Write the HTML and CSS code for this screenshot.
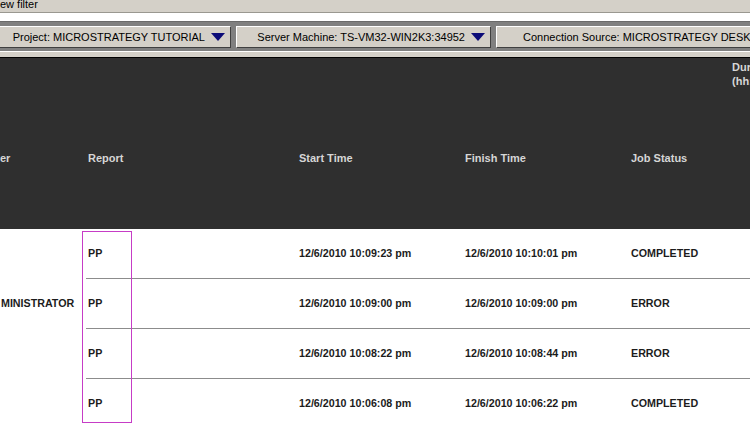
FILE: index.html
```html
<!DOCTYPE html>
<html lang="en">
<head>
    <meta charset="UTF-8">
    <title>Job Monitor</title>
    <link rel="stylesheet" href="styles.css">
</head>
<body>
    <div class="menu">ew filter</div>

    <div class="toolbar">
        <div class="combo">
            <span>Project: MICROSTRATEGY TUTORIAL</span>
            <svg class="arrow" width="14" height="8" viewBox="0 0 14 8"><polygon points="0,0 14,0 7,8" /></svg>
        </div>
        <div class="combo">
            <span>Server Machine: TS-VM32-WIN2K3:34952</span>
            <svg class="arrow" width="14" height="8" viewBox="0 0 14 8"><polygon points="0,0 14,0 7,8" /></svg>
        </div>
        <div class="combo combo-last">
            <span>Connection Source: MICROSTRATEGY DESKTOP</span>
            <svg class="arrow" width="14" height="8" viewBox="0 0 14 8"><polygon points="0,0 14,0 7,8" /></svg>
        </div>
    </div>
    <div class="sep"></div>

    <div class="grid head">
        <div class="hcell">er</div>
        <div class="hcell">Report</div>
        <div class="hcell">Start Time</div>
        <div class="hcell">Finish Time</div>
        <div class="hcell">Job Status</div>
        <div class="hcell dur">Duration<br>(hh:mm:ss)</div>
    </div>

    <div class="rows">
        <div class="grid row">
            <div class="cell user"></div>
            <div class="cell">PP</div>
            <div class="cell">12/6/2010 10:09:23 pm</div>
            <div class="cell">12/6/2010 10:10:01 pm</div>
            <div class="cell">COMPLETED</div>
            <div class="cell"></div>
        </div>
        <div class="grid row">
            <div class="cell user">MINISTRATOR</div>
            <div class="cell">PP</div>
            <div class="cell">12/6/2010 10:09:00 pm</div>
            <div class="cell">12/6/2010 10:09:00 pm</div>
            <div class="cell">ERROR</div>
            <div class="cell"></div>
        </div>
        <div class="grid row">
            <div class="cell user"></div>
            <div class="cell">PP</div>
            <div class="cell">12/6/2010 10:08:22 pm</div>
            <div class="cell">12/6/2010 10:08:44 pm</div>
            <div class="cell">ERROR</div>
            <div class="cell"></div>
        </div>
        <div class="grid row">
            <div class="cell user"></div>
            <div class="cell">PP</div>
            <div class="cell">12/6/2010 10:06:08 pm</div>
            <div class="cell">12/6/2010 10:06:22 pm</div>
            <div class="cell">COMPLETED</div>
            <div class="cell"></div>
        </div>
        <div class="highlight"></div>
    </div>
</body>
</html>
```

FILE: styles.css
```css
body {
    margin: 0;
    width: 750px;
    height: 427px;
    overflow: hidden;
    background-color: #fff;
    font-family: "Liberation Sans", Arial, sans-serif;
}
.menu {
    height: 12px;
    line-height: 8px;
    font-size: 11px;
    color: #000;
    background-color: #d4d0c8;
    border-bottom: 1px solid #9a9890;
    overflow: hidden;
}
.toolbar {
    display: flex;
    gap: 5px;
    margin-top: 8px;
    padding: 4px 0 3px 0;
    background-color: #808080;
    border-top: 1px solid #6a6a6a;
    overflow: hidden;
}
.combo {
    flex: none;
    display: flex;
    align-items: center;
    justify-content: flex-end;
    gap: 6px;
    box-sizing: border-box;
    height: 22px;
    padding-right: 5px;
    background-color: #d4d0c8;
    border-top: 1px solid #fff;
    border-left: 1px solid #fff;
    border-right: 1px solid #404040;
    border-bottom: 1px solid #404040;
    font-size: 11px;
    color: #000;
    white-space: nowrap;
}
.combo:first-child {
    width: 231px;
    border-left: none;
}
.combo:nth-child(2) {
    width: 255px;
}
.combo-last {
    width: 300px;
    justify-content: flex-start;
    padding-left: 26px;
}
.arrow {
    flex: none;
    fill: #0c0c78;
}
.sep {
    height: 5px;
    background-color: #d4d0c8;
    border-top: 1px solid #fff;
    border-bottom: 1px solid #000;
}
.grid {
    display: grid;
    grid-template-columns: 86px 211px 166px 166px 101px 1fr;
}
.head {
    height: 171px;
    background-color: #2f2f2f;
    color: #d6d6d6;
    font-size: 11px;
    font-weight: bold;
}
.hcell {
    padding: 94px 0 0 2px;
    white-space: nowrap;
    overflow: hidden;
}
.hcell:first-child {
    padding-left: 0;
}
.hcell.dur {
    padding-top: 2px;
    line-height: 14px;
}
.rows {
    position: relative;
}
.row {
    height: 50px;
}
.cell {
    display: flex;
    align-items: center;
    padding: 0 0 2px 2px;
    border-bottom: 1px solid #8c8c8c;
    font-size: 10.7px;
    font-weight: bold;
    color: #1c1c1c;
    white-space: nowrap;
}
.cell.user {
    padding-left: 1px;
    border-bottom: none;
    overflow: hidden;
}
.highlight {
    position: absolute;
    left: 82px;
    top: 2px;
    width: 48px;
    height: 190px;
    border: 1px solid #c63cc6;
}
```
